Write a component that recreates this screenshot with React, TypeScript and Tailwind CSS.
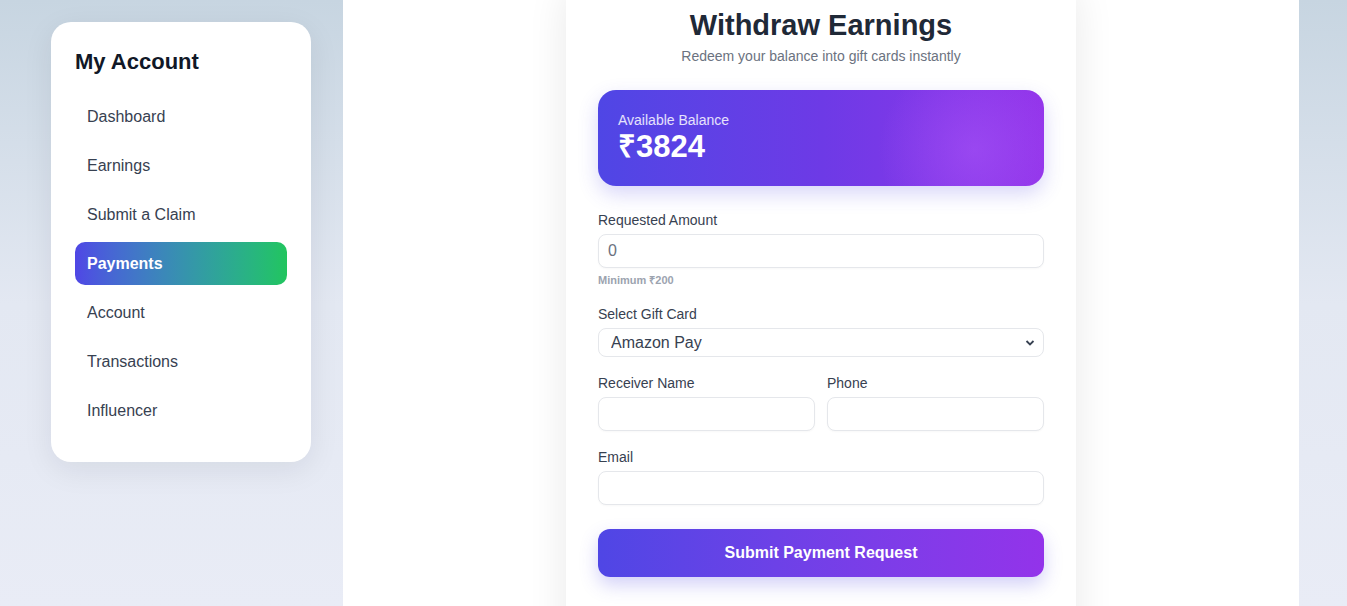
import { useState } from 'react'

const navItems = ['Dashboard', 'Earnings', 'Submit a Claim', 'Payments', 'Account', 'Transactions', 'Influencer']

function Sidebar() {
  return (
    <aside className="mt-[22px] w-[260px] shrink-0 self-start rounded-[20px] bg-white px-6 pt-[26px] pb-[30px] shadow-[0_8px_30px_rgba(15,23,42,0.08)]">
      <h2 className="mb-[19px] text-[22px] leading-7 font-bold text-[#111827]">My Account</h2>
      <nav className="flex flex-col gap-[6px]">
        {navItems.map((item) =>
          item === 'Payments' ? (
            <a
              key={item}
              className="flex h-[43px] items-center rounded-[10px] bg-gradient-to-r from-[#4f46e5] to-[#22c55e] px-3 text-[16px] font-bold text-white"
            >
              {item}
            </a>
          ) : (
            <a key={item} className="flex h-[43px] items-center px-3 text-[16px] text-[#374151]">
              {item}
            </a>
          )
        )}
      </nav>
    </aside>
  )
}

function Field({ label, children }: { label: string; children: React.ReactNode }) {
  return (
    <div className="flex flex-col">
      <label className="mb-1 text-[14px] leading-5 text-[#374151]">{label}</label>
      {children}
    </div>
  )
}

const inputCls =
  'h-[34px] w-full rounded-lg border border-[#e5e7eb] bg-white px-[9px] text-[16px] text-[#6b7280] shadow-[0_1px_2px_rgba(0,0,0,0.03)] outline-none'

function WithdrawCard() {
  const [amount, setAmount] = useState('0')
  return (
    <div className="-mt-6 w-[510px] self-start rounded-[20px] bg-white px-8 pt-[31px] pb-16 shadow-[0_10px_40px_rgba(0,0,0,0.09)]">
      <h1 className="text-center text-[29px] leading-9 font-bold text-[#1f2937]">Withdraw Earnings</h1>
      <p className="mt-[3px] text-center text-[14px] leading-5 text-[#6b7280]">
        Redeem your balance into gift cards instantly
      </p>

      {/* balance */}
      <div className="relative mt-6 overflow-hidden rounded-[18px] bg-gradient-to-r from-[#4f46e5] via-[#6d3ae6] to-[#9333ea] px-5 pt-[21px] pb-[22px] shadow-[0_8px_20px_rgba(79,70,229,0.22)]">
        <div className="pointer-events-none absolute -right-10 top-[-20px] h-[160px] w-[220px] rounded-full bg-[radial-gradient(circle,rgba(168,85,247,0.55),rgba(168,85,247,0)_70%)]" />
        <div className="relative text-[14px] leading-[18px] text-white/85">Available Balance</div>
        <div className="relative mt-[1px] text-[31px] leading-[34px] font-bold text-white">₹3824</div>
      </div>

      <form className="mt-6 flex flex-col gap-4" onSubmit={(e) => e.preventDefault()}>
        <div className="flex flex-col">
          <Field label="Requested Amount">
            <input className={inputCls} value={amount} onChange={(e) => setAmount(e.target.value)} />
          </Field>
          <span className="mt-1 text-[11px] leading-4 font-semibold text-[#9ca3af]">Minimum ₹200</span>
        </div>

        <Field label="Select Gift Card">
          <div className="relative">
            <select className="h-[29px] w-full appearance-none rounded-lg border border-[#e5e7eb] bg-white pl-3 text-[16px] text-[#374151] outline-none">
              <option>Amazon Pay</option>
              <option>Flipkart</option>
              <option>Google Play</option>
            </select>
            <svg
              className="pointer-events-none absolute right-[9px] top-[11px] h-[8px] w-[10px] text-[#374151]"
              viewBox="0 0 10 8"
              fill="none"
              stroke="currentColor"
              strokeWidth="1.8"
            >
              <path d="M1.5 2l3.5 3.5L8.5 2" />
            </svg>
          </div>
        </Field>

        <div className="grid grid-cols-2 gap-3">
          <Field label="Receiver Name">
            <input className={inputCls} />
          </Field>
          <Field label="Phone">
            <input className={inputCls} />
          </Field>
        </div>

        <Field label="Email">
          <input className={inputCls} />
        </Field>

        <button className="mt-2 h-12 w-full rounded-xl bg-gradient-to-r from-[#4f46e5] to-[#9333ea] text-[16px] font-bold text-white shadow-[0_8px_18px_rgba(79,70,229,0.25)]">
          Submit Payment Request
        </button>
      </form>

      <p className="mt-[26px] text-center text-[13px] text-[#6b7280]">
        Payments are processed within 24–48 hours
      </p>
    </div>
  )
}

export default function App() {
  return (
    <div
      className="flex h-[606px] gap-8 overflow-hidden bg-gradient-to-b from-[#c7d5e1] via-[#e3e8f2] to-[#e9ecf6] pr-12 pl-[51px]"
      style={{ fontFamily: '"Liberation Sans", Arial, sans-serif' }}
    >
      <Sidebar />
      <main className="flex flex-1 justify-center bg-white">
        <WithdrawCard />
      </main>
    </div>
  )
}
